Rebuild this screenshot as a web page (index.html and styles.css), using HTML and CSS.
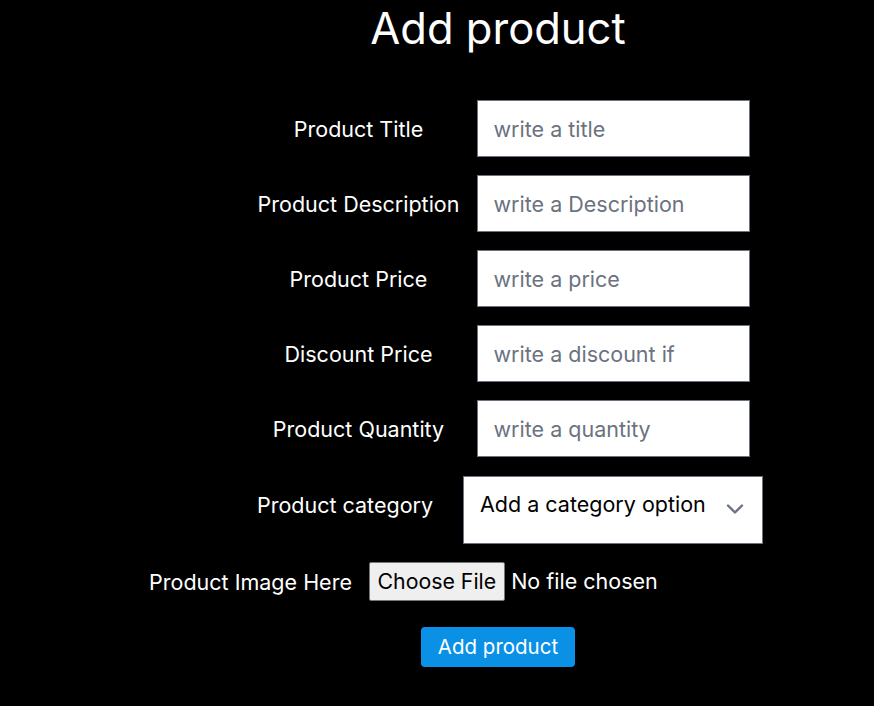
FILE: index.html
```html
<!DOCTYPE html>
<html lang="en">
<head>
<meta charset="utf-8">
<title>Add product</title>
<link rel="stylesheet" href="styles.css">
</head>
<body>
<main class="page">
  <h1 class="page-title">Add product</h1>
  <form class="product-form">
    <div class="row">
      <label class="row-label" for="title">Product Title</label>
      <input class="text-input" id="title" type="text" placeholder="write a title">
    </div>
    <div class="row">
      <label class="row-label" for="desc">Product Description</label>
      <input class="text-input" id="desc" type="text" placeholder="write a Description">
    </div>
    <div class="row">
      <label class="row-label" for="price">Product Price</label>
      <input class="text-input" id="price" type="text" placeholder="write a price">
    </div>
    <div class="row">
      <label class="row-label" for="discount">Discount Price</label>
      <input class="text-input" id="discount" type="text" placeholder="write a discount if">
    </div>
    <div class="row">
      <label class="row-label" for="qty">Product Quantity</label>
      <input class="text-input" id="qty" type="text" placeholder="write a quantity">
    </div>
    <div class="row row-select">
      <label class="row-label" for="cat">Product category</label>
      <div class="select-wrap">
        <select class="select-input" id="cat">
          <option>Add a category option</option>
        </select>
        <svg class="chevron" width="18" height="10" viewBox="0 0 18 10" aria-hidden="true">
          <polyline points="2,1.5 9,8.5 16,1.5" fill="none" stroke="#6b7280" stroke-width="2.4" stroke-linecap="round" stroke-linejoin="round"/>
        </svg>
      </div>
    </div>
    <div class="row">
      <label class="row-label" for="img">Product Image Here</label>
      <input class="file-input" id="img" type="file">
    </div>
    <div class="actions">
      <button class="submit-btn" type="button">Add product</button>
    </div>
  </form>
</main>
</body>
</html>
```

FILE: styles.css
```css
html, body {
  margin: 0;
  padding: 0;
  background: #000;
}

body {
  color: #fff;
  font-family: "Inter", "Noto Sans", sans-serif;
  font-size: 21.5px;
  line-height: 28px;
}

.page {
  margin-left: 122px;
  display: flex;
  flex-direction: column;
  align-items: center;
}

.page-title {
  margin: 0;
  padding-top: 4px;
  font-size: 43.5px;
  line-height: 48px;
  font-weight: 400;
}

.product-form {
  margin-top: 48px;
  display: flex;
  flex-direction: column;
  align-items: center;
  gap: 18px;
}

.row {
  display: flex;
  align-items: center;
  justify-content: center;
  gap: 6px;
}

.row-select {
  margin-top: 1px;
}

.row-select .row-label {
  position: relative;
  top: -5px;
}

.row-label {
  width: 224px;
  text-align: center;
  font-size: 21.5px;
}

.text-input {
  box-sizing: border-box;
  width: 273px;
  height: 57px;
  margin: 0;
  padding: 0 16px;
  border: 1px solid #6b7280;
  border-radius: 0;
  background: #fff;
  color: #111;
  font-family: inherit;
  font-size: 21.5px;
  outline: none;
}

.text-input::placeholder {
  color: #6b7280;
  opacity: 1;
}

.select-wrap {
  position: relative;
}

.select-input {
  box-sizing: border-box;
  appearance: none;
  -webkit-appearance: none;
  width: 300px;
  height: 68px;
  margin: 0;
  padding: 10px 48px 22px 16px;
  border: 1px solid #6b7280;
  border-radius: 0;
  background: #fff;
  color: #000;
  font-family: inherit;
  font-size: 21.5px;
  line-height: 28px;
}

.chevron {
  position: absolute;
  right: 19px;
  top: 28px;
}

.file-input {
  width: 489px;
  color: #fff;
  font-family: inherit;
  font-size: 21.5px;
  line-height: 27px;
}

.file-input::file-selector-button {
  margin: 0 6px 0 0;
  padding: 5px 8px;
  border: 1px solid #767676;
  border-radius: 2px;
  background: #efefef;
  color: #000;
  font-family: inherit;
  font-size: 21.3px;
  line-height: 27px;
}

.actions {
  margin-top: 8px;
  display: flex;
  justify-content: center;
}

.submit-btn {
  margin: 0;
  padding: 5px 17px 6px;
  border: none;
  border-radius: 4px;
  background: #0a91e6;
  color: #fff;
  font-family: inherit;
  font-size: 20.5px;
  line-height: 29px;
}
```
